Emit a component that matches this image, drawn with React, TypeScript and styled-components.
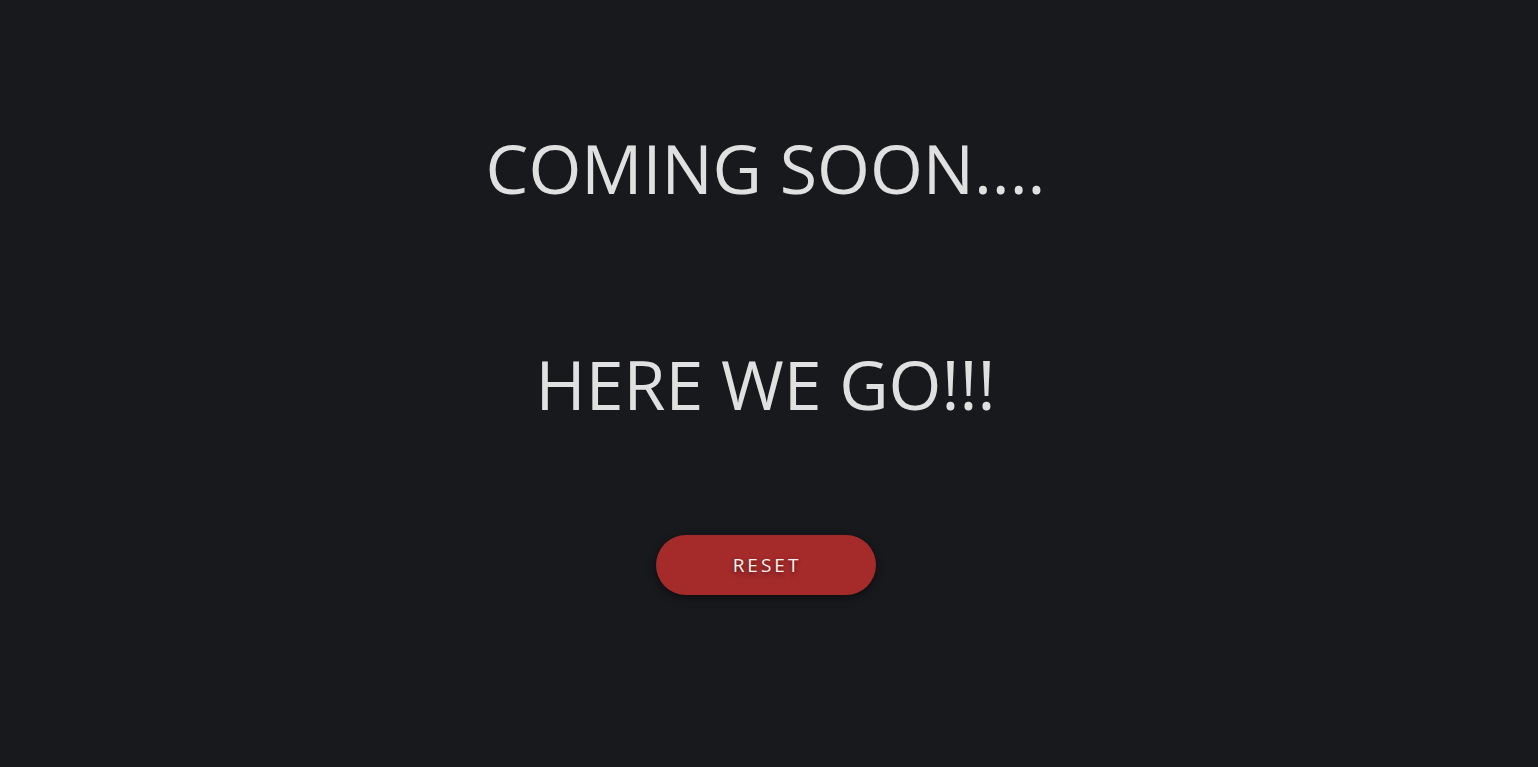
import React from "react";
import styled, { createGlobalStyle } from "styled-components";

const Global = createGlobalStyle`
  html, body { margin: 0; padding: 0; background: #18191d; }
  body { font-family: "Open Sans", "Noto Sans", sans-serif; }
`;

const Page = styled.main`
  min-height: 767px;
  display: flex;
  flex-direction: column;
  align-items: center;
  padding: 116px 7px 0 0;
  box-sizing: border-box;
`;

const Heading = styled.h1<{ $gap: number }>`
  margin: 0 0 ${(p) => p.$gap}px;
  font-size: 68px;
  font-weight: 400;
  line-height: 104px;
  color: #e0e0e0;
`;

const ResetButton = styled.button`
  width: 220px;
  height: 60px;
  border: none;
  border-radius: 30px;
  background: #a52a2a;
  color: #f2f2f2;
  font-family: "Open Sans", "Noto Sans", sans-serif;
  font-size: 19px;
  letter-spacing: 3px;
  padding: 0 0 0 3px;
  text-shadow: 0 2px 4px rgba(0, 0, 0, 0.5);
  box-shadow: 0 3px 8px rgba(0, 0, 0, 0.45);
  cursor: pointer;
`;

export default function App() {
  return (
    <>
      <Global />
      <Page>
        <Heading $gap={112}>COMING SOON....</Heading>
        <Heading $gap={99}>HERE WE GO!!!</Heading>
        <ResetButton>RESET</ResetButton>
      </Page>
    </>
  );
}
